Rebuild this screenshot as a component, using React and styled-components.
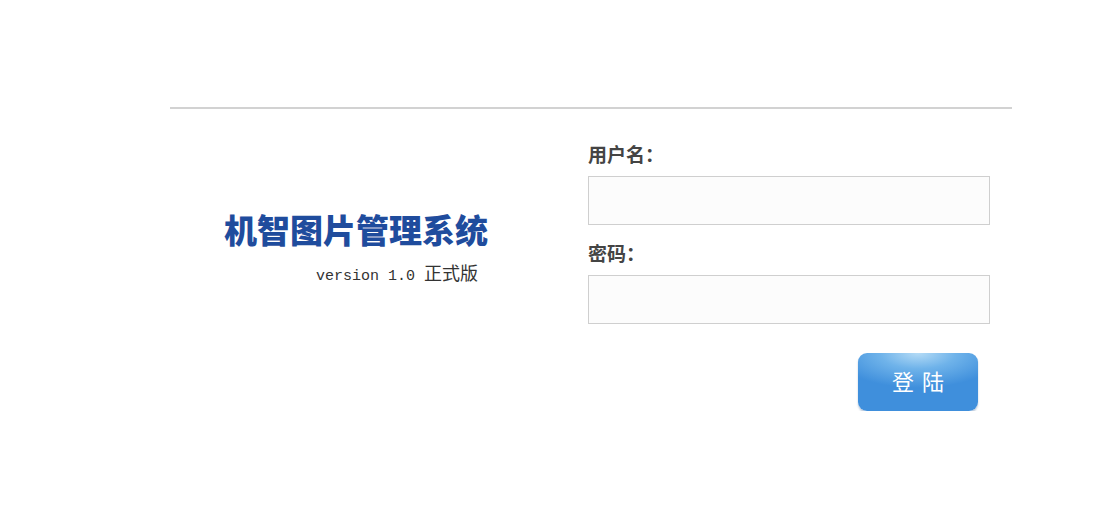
import styled, { createGlobalStyle } from 'styled-components';

const GlobalStyle = createGlobalStyle`
  body {
    margin: 0;
    background: #fff;
    font-family: "Noto Sans CJK SC", "Liberation Sans", sans-serif;
  }
`;

const Page = styled.div`
  padding: 107px 0 0 170px;
`;

const Frame = styled.div`
  width: 842px;
  border-top: 2px solid #d2d2d2;
  display: flex;
`;

const Brand = styled.div`
  width: 418px;
  padding-top: 100px;
  display: flex;
  flex-direction: column;
  align-items: flex-end;
`;

const BrandInner = styled.div`
  display: flex;
  flex-direction: column;
  align-items: flex-end;
  margin-right: 100px;
`;

const Title = styled.h1`
  margin: 0;
  font-size: 33px;
  line-height: 40px;
  font-weight: 900;
  color: #1f4c9d;
`;

const Version = styled.div`
  margin: 13px 10px 0 0;
  font-size: 15px;
  line-height: 20px;
  color: #333;
  font-family: "Liberation Mono", monospace;

  span {
    font-family: "Noto Sans CJK SC", sans-serif;
    font-size: 18px;
    margin-left: 9px;
  }
`;

const Form = styled.form`
  width: 402px;
  padding-top: 33px;
  display: flex;
  flex-direction: column;
`;

const Label = styled.label`
  display: block;
  font-size: 19px;
  line-height: 24px;
  font-weight: 700;
  color: #444;
  margin: ${(p) => (p.$first ? '0' : '16px')} 0 10px;
`;

const Input = styled.input`
  box-sizing: border-box;
  width: 402px;
  height: 49px;
  border: 1px solid #cfcfcf;
  background: #fcfcfc;
  outline: none;
  padding: 0 10px;
  font-size: 16px;
`;

const Actions = styled.div`
  display: flex;
  justify-content: flex-end;
  padding: 29px 12px 0 0;
`;

const Button = styled.button`
  width: 120px;
  height: 58px;
  border: none;
  border-radius: 9px;
  background: radial-gradient(ellipse 70% 60% at 50% 0%, #b4dbf6 0%, #6fb3ea 45%, #3f8fdc 100%);
  box-shadow: 0 2px 2px rgba(60, 100, 150, 0.35);
  color: #fff;
  font-size: 22px;
  letter-spacing: 8px;
  padding: 0 0 4px 8px;
  font-family: "Noto Sans CJK SC", sans-serif;
  cursor: pointer;
`;

export default function App() {
  return (
    <>
      <GlobalStyle />
      <Page>
        <Frame>
          <Brand>
            <BrandInner>
              <Title>机智图片管理系统</Title>
              <Version>
                version 1.0<span>正式版</span>
              </Version>
            </BrandInner>
          </Brand>
          <Form onSubmit={(e) => e.preventDefault()}>
            <Label $first>用户名：</Label>
            <Input type="text" />
            <Label>密码：</Label>
            <Input type="password" />
            <Actions>
              <Button type="submit">登陆</Button>
            </Actions>
          </Form>
        </Frame>
      </Page>
    </>
  );
}
